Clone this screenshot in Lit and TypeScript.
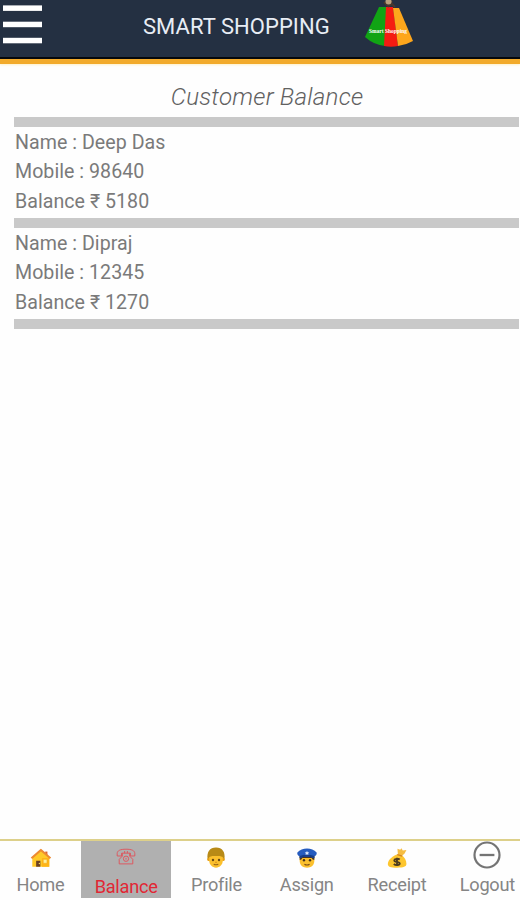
import { LitElement, html, css, svg } from "lit";
import { customElement, property } from "lit/decorators.js";

const house = svg`
  <rect x="16.6" y="5" width="2.4" height="5" fill="#d9622b"/>
  <path d="M2.5 11 12 3l9 8v10.5h-18.5z" fill="#ffc928"/>
  <path d="M13 12h8v9.5h-8z" fill="#ffb515"/>
  <path d="M1.6 12.2 11.9 3.2l10.4 9" fill="none" stroke="#ed8a32" stroke-width="2.3" stroke-linejoin="round"/>
  <rect x="6.7" y="15" width="4.6" height="6.5" fill="#6b4123"/>
  <path d="M14.5 13.5h4v4.2h-4z" fill="#fff19b" stroke="#f2a51b" stroke-width=".5"/>
  <circle cx="10.2" cy="18" r=".7" fill="#ffe36a"/>`;

const phone = svg`
  <g fill="none" stroke="#e0525a" stroke-width="1" stroke-linejoin="round">
    <path d="M2.4 8.300c0-3.400 3.400-4.800 9.600-4.800s9.600 1.400 9.600 4.800v2.600h-4.800V7.800H7.200v3.100H2.400z"/>
    <path d="M8 8v3l-3.400 3.600V19.500h14.800v-4.900L16 11V8"/>
    <circle cx="12" cy="13.900" r="2.900"/>
    <path d="M10.500 5.500v2.300M13.500 5.500v2.300M12 13v1.800"/>
  </g>`;

const man = svg`
  <path d="M2.800 13C1.800 5.500 5 .500 12 .500s10.200 5 9.200 12.500z" fill="#b88a16"/>
  <circle cx="4.200" cy="13.500" r="1.800" fill="#e59c13"/><circle cx="19.800" cy="13.500" r="1.800" fill="#e59c13"/>
  <path d="M4.600 10.800C7 9.800 9 9.800 12 9.800s5 0 7.400 1v4c0 4.600-3.300 7.700-7.400 7.700s-7.400-3.100-7.400-7.700z" fill="#fbc02d"/>
  <circle cx="8.700" cy="14.200" r="1.300" fill="#6b4a13"/><circle cx="15.300" cy="14.200" r="1.300" fill="#6b4a13"/>
  <path d="M11 16.700h2" stroke="#d88b12" stroke-width="1.200"/>
  <path d="M9.500 18.800q2.500 1.200 5 0" fill="none" stroke="#9a6515" stroke-width="1.200"/>`;

const officer = svg`
  <path d="M4 10h16v5c0 4.800-3.600 7.600-8 7.600S4 19.800 4 15z" fill="#fbc02d"/>
  <path d="M4 10h16v4h-1.500L17 12H7l-1.500 2H4z" fill="#493522"/>
  <path d="M1.500 6C4 3 8 1.500 12 1.500s8 1.500 10.500 4.500c.5 2-.5 3.500-2.500 4v2c-5-1.700-11-1.700-16 0v-2C2 9.500 1 8 1.500 6z" fill="#265cbf"/>
  <path d="M4 9.800c5-1.800 11-1.800 16 0v2.200c-5-1.700-11-1.700-16 0z" fill="#173c88"/>
  <path d="m12 4.300.8 1.400 1.600.2-1.100 1.100.2 1.600-1.500-.7-1.500.7.200-1.600-1.100-1.100 1.600-.2z" fill="#dce9ff"/>
  <circle cx="8.700" cy="14.400" r="1.300" fill="#46301d"/><circle cx="15.300" cy="14.400" r="1.300" fill="#46301d"/>
  <path d="M9.200 18.800q2.800 1.700 5.600 0" fill="none" stroke="#7c4b13" stroke-width="1.200"/>`;

const moneybag = svg`
  <path d="M13 8.500 12.500 2l3 1 1.300-1.600 1.500 2.300 4-.4-2 3.700-3.600 3.300z" fill="#f6bd42"/>
  <path d="M12.500 8C9 9 2 13.600 2 18.500c0 3.200 3 4 10 4s10.300-.8 10.300-4.200c0-4-2.300-7.300-5.300-9.300z" fill="#fdc62f"/>
  <path d="m12.300 8.300 5.400 1.700" stroke="#d18427" stroke-width="1.500"/>
  <path d="M15 13.700c-2-1.500-6-1-6 1s6 1.300 6 3.300-4.500 2.300-6.500.5M12 11.700v8.800" fill="none" stroke="#4c3c20" stroke-width="2"/>`;

const minus = svg`
  <circle cx="14" cy="14" r="12.500" fill="none" stroke="#747474" stroke-width="2.200"/>
  <path d="M6.600 14h14.800" stroke="#747474" stroke-width="2.300"/>`;

const items = [
  { label: "Home", icon: house },
  { label: "Balance", icon: phone, active: true },
  { label: "Profile", icon: man },
  { label: "Assign", icon: officer },
  { label: "Receipt", icon: moneybag },
  { label: "Logout", icon: minus, large: true },
];

const customers = [
  { name: "Deep Das", mobile: "98640", balance: "5180" },
  { name: "Dipraj", mobile: "12345", balance: "1270" },
];

@customElement("shop-header")
class ShopHeader extends LitElement {
  static styles = css`
    :host { display: flex; flex: none; box-sizing: border-box; height: 64px; background: #243042;
      border-bottom: 5px solid #f2aa2b; box-shadow: inset 0 -2px #05080c, 0 1px 2px #fff0c8; }
    .menu { width: 39px; height: 39px; margin: 5px 0 0 3px; fill: #fff; }
    .title { margin: 14px 0 0 101px; width: 188px; font-size: 22px; line-height: 26px; letter-spacing: .05px; color: #e8edf5; white-space: nowrap; }
    .logo { width: 48px; height: 48px; margin-left: 34px; }
    .brand { font: bold 6.500px "Liberation Serif", serif; fill: #fff; }
  `;
  render() {
    return html`
      <svg class="menu" viewBox="0 0 39 39">
        <rect y=".4" width="39" height="5.500"/><rect y="16.700" width="39" height="5.500"/><rect y="32.800" width="39" height="5.500"/>
      </svg>
      <div class="title">SMART SHOPPING</div>
      <svg class="logo" viewBox="0 0 48 48">
        <path d="M14 7h9l-3 39Q9 45 0 37z" fill="#11a414"/>
        <path d="M21 7h7l5 39q-7 1.500-14 0z" fill="#f51b12"/>
        <path d="M28 8h6l14 33q-7 4-15 5z" fill="#fda61c"/>
        <path d="m19 2 4 4 4-2 3 3M27 1l-4 6" fill="none" stroke="#49382e" stroke-width="2"/>
        <circle cx="23.500" cy="1.500" r="3" fill="#b9a07e"/>
        <text class="brand" x="4" y="33" textLength="38" lengthAdjust="spacingAndGlyphs">Smart Shopping</text>
      </svg>`;
  }
}

@customElement("customer-record")
class CustomerRecord extends LitElement {
  @property({ attribute: false }) customer = customers[0];
  static styles = css`
    :host { display: block; box-sizing: border-box; height: 101.200px; padding-top: 1.300px; border-bottom: 10px solid #c9c9c9;
      color: #7a7a7a; font-size: 19.600px; line-height: 29.500px; }
    .row { padding-left: 1px; white-space: nowrap; letter-spacing: .04px; }
  `;
  render() {
    const c = this.customer;
    return html`
      <div class="row">Name : ${c.name}</div>
      <div class="row">Mobile : ${c.mobile}</div>
      <div class="row">Balance ₹ ${c.balance}</div>`;
  }
}

@customElement("bottom-nav")
class BottomNav extends LitElement {
  static styles = css`
    :host { display: grid; flex: none; box-sizing: border-box; grid-template-columns: 81px repeat(5, 90.300px); height: 61px;
      border-top: 2.500px solid #ddd08a; background: #fefefe; overflow: hidden; }
    .item { display: flex; flex-direction: column; align-items: center; box-sizing: border-box; height: 57px; font-size: 18.200px; letter-spacing: -.25px; color: #858585; }
    .icon { flex: none; width: 22px; height: 22px; margin-top: 6px; }
    .large { width: 28px; height: 28px; margin-top: 0; }
    .label { margin-top: 5px; line-height: 22px; white-space: nowrap; }
    .active { background: #b0b0b0; color: #e12734; }
    .active .icon { margin-top: 5px; }
    .active .label { margin-top: 8px; }
  `;
  render() {
    return html`${items.map((i) => html`
      <div class="item ${i.active ? "active" : ""}">
        <svg class="icon ${i.large ? "large" : ""}" viewBox=${i.large ? "0 0 28 28" : "0 0 24 24"}>${i.icon}</svg>
        <div class="label">${i.label}</div>
      </div>`)}`;
  }
}

@customElement("app-root")
class AppRoot extends LitElement {
  static styles = css`
    :host { display: flex; flex-direction: column; height: 900px; background: #fefefe; font-family: Roboto, "Noto Sans", sans-serif; overflow: hidden; }
    .content { flex: 1; padding: 0 1px 0 14px; }
    .heading { margin: 19px 0 5px; padding-left: 1px; height: 29px; line-height: 29px; font-size: 24.200px; font-weight: 300; letter-spacing: .22px; font-style: italic; text-align: center; color: #616161; }
    .rule { height: 9.500px; background: #c9c9c9; }
  `;
  render() {
    return html`
      <shop-header></shop-header>
      <div class="content">
        <div class="heading">Customer Balance</div>
        <div class="rule"></div>
        ${customers.map((c) => html`<customer-record .customer=${c}></customer-record>`)}
      </div>
      <bottom-nav></bottom-nav>`;
  }
}
